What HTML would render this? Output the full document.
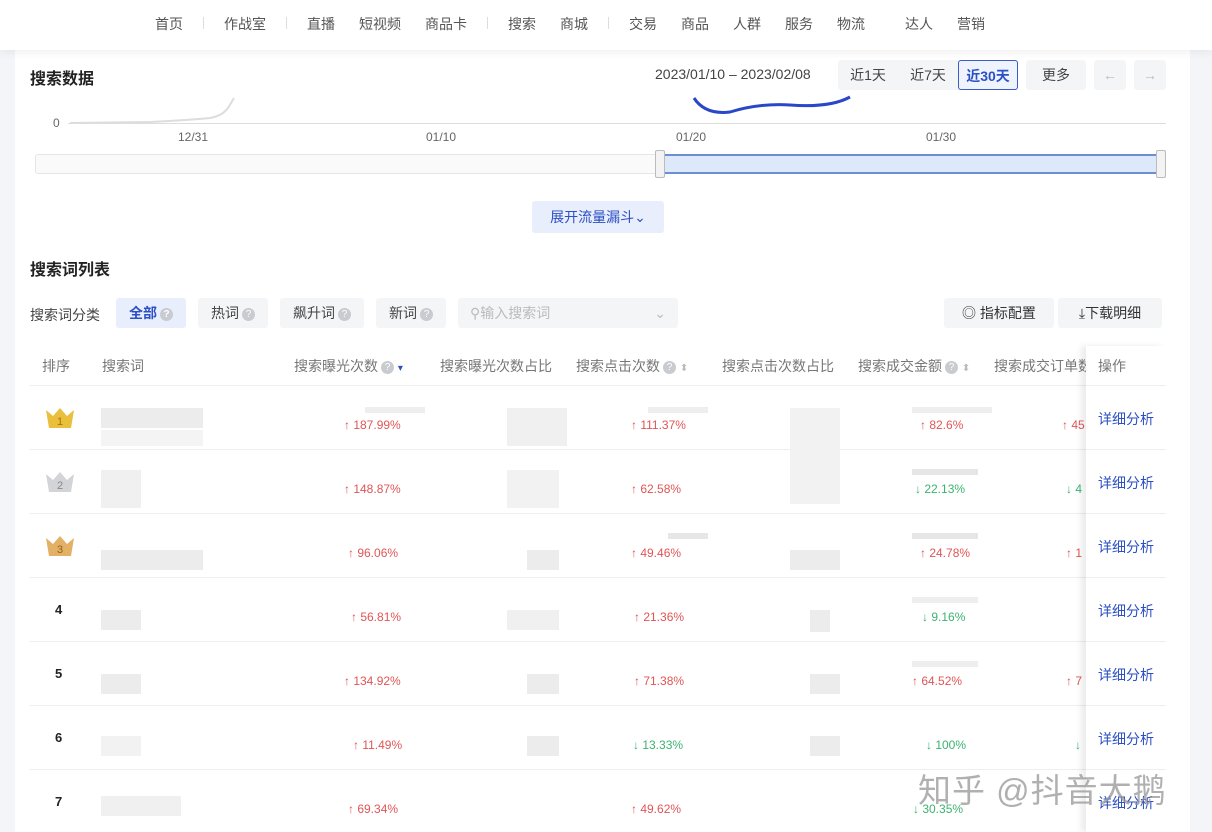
<!DOCTYPE html>
<html><head><meta charset="utf-8"><style>
*{margin:0;padding:0;box-sizing:border-box}
body{width:1212px;height:832px;overflow:hidden;background:#f3f5f9;font-family:"Liberation Sans","Noto Sans CJK SC",sans-serif;position:relative;color:#333}
.a{position:absolute}
.main{left:15px;top:0;width:1175px;height:832px;background:#fff}
.nav{left:0;top:0;width:1212px;height:50px;background:#fff;box-shadow:0 3px 8px rgba(0,0,0,.06);font-size:14px;color:#555}
.nav span{position:absolute;top:14px}
.sep{position:absolute;top:17px;width:1px;height:12px;background:#ddd}
.btn{position:absolute;height:30px;line-height:30px;text-align:center;font-size:14px;border-radius:3px}
.q{display:inline-block;width:13px;height:13px;border-radius:50%;background:#c8cbd0;color:#fff;font-size:10px;line-height:13px;text-align:center;vertical-align:1px;margin-left:3px}
.th{position:absolute;top:356px;font-size:14px;color:#777}
.hl{position:absolute;left:30px;width:1136px;height:1px;background:#eceef2}
.ol{position:absolute;left:1086px;width:80px;height:1px;background:#eceef2}
.up{color:#e05555;font-size:12px;position:absolute}
.dn{color:#3cb371;font-size:12px;position:absolute}
.blk{position:absolute;background:#ececec}
.op{position:absolute;left:1098px;font-size:14px;color:#2b4fc4}
.rk{position:absolute;left:55px;font-size:13px;font-weight:bold;color:#222}
</style></head><body>
<div class="a main"></div>
<div class="a nav">
<span style="left:155px">首页</span><div class="sep" style="left:203px"></div>
<span style="left:224px">作战室</span><div class="sep" style="left:286px"></div>
<span style="left:307px">直播</span><span style="left:359px">短视频</span><span style="left:425px">商品卡</span><div class="sep" style="left:487px"></div>
<span style="left:508px">搜索</span><span style="left:560px">商城</span><div class="sep" style="left:608px"></div>
<span style="left:629px">交易</span><span style="left:681px">商品</span><span style="left:733px">人群</span><span style="left:785px">服务</span><span style="left:837px">物流</span><span style="left:905px">达人</span><span style="left:957px">营销</span>
</div>
<div class="a" style="left:30px;top:65px;font-size:16px;font-weight:bold;color:#222">搜索数据</div>
<div class="a" style="left:655px;top:66px;font-size:14px;color:#444">2023/01/10 – 2023/02/08</div>
<div class="btn" style="left:838px;top:60px;width:180px;background:#f4f5f7"></div>
<div class="btn" style="left:838px;top:60px;width:60px;color:#444">近1天</div>
<div class="btn" style="left:898px;top:60px;width:60px;color:#444">近7天</div>
<div class="btn" style="left:958px;top:60px;width:60px;color:#2b4fc4;font-weight:bold;border:1px solid #3b5cc4;background:#eef3fd">近30天</div>
<div class="btn" style="left:1026px;top:60px;width:60px;background:#f4f5f7;color:#444">更多</div>
<div class="btn" style="left:1094px;top:60px;width:32px;background:#f4f5f7;color:#bbb">←</div>
<div class="btn" style="left:1134px;top:60px;width:32px;background:#f4f5f7;color:#bbb">→</div>
<div class="a" style="left:53px;top:116px;font-size:12px;color:#666">0</div>
<div class="a" style="left:68px;top:123px;width:1098px;height:1px;background:#ddd"></div>
<svg class="a" style="left:0;top:90px" width="1212" height="40"><path d="M70 33 L150 32 Q190 30 210 28 Q222 26 228 18 L234 8" stroke="#ddd" stroke-width="2" fill="none"/><path d="M694 8 Q705 25 730 22 Q760 13 790 15 Q830 18 850 7" stroke="#2a47c9" stroke-width="3" fill="none"/></svg>
<div class="a" style="left:178px;top:130px;font-size:12px;color:#666">12/31</div>
<div class="a" style="left:426px;top:130px;font-size:12px;color:#666">01/10</div>
<div class="a" style="left:676px;top:130px;font-size:12px;color:#666">01/20</div>
<div class="a" style="left:926px;top:130px;font-size:12px;color:#666">01/30</div>
<div class="a" style="left:35px;top:154px;width:630px;height:20px;border:1px solid #e6e6e6;background:#fafafa;border-radius:3px"></div>
<div class="a" style="left:663px;top:154px;width:497px;height:20px;background:#dde8fb;border-top:2px solid #6b8fd1;border-bottom:2px solid #6b8fd1"></div>
<div class="a" style="left:655px;top:150px;width:10px;height:28px;border:1px solid #bbb;background:#f3f3f3;border-radius:2px"></div>
<div class="a" style="left:1156px;top:150px;width:10px;height:28px;border:1px solid #bbb;background:#f3f3f3;border-radius:2px"></div>
<div class="btn" style="left:532px;top:201px;width:132px;height:32px;line-height:32px;background:#e8eefc;color:#2b4fc4">展开流量漏斗⌄</div>
<div class="a" style="left:30px;top:256px;font-size:16px;font-weight:bold;color:#222">搜索词列表</div>
<div class="a" style="left:30px;top:305px;font-size:14px;color:#444">搜索词分类</div>
<div class="btn" style="left:116px;top:298px;width:70px;background:#e8eefc;color:#2b4fc4;font-weight:bold">全部<span class="q">?</span></div>
<div class="btn" style="left:198px;top:298px;width:70px;background:#f4f5f7;color:#444">热词<span class="q">?</span></div>
<div class="btn" style="left:280px;top:298px;width:84px;background:#f4f5f7;color:#444">飙升词<span class="q">?</span></div>
<div class="btn" style="left:376px;top:298px;width:70px;background:#f4f5f7;color:#444">新词<span class="q">?</span></div>
<div class="btn" style="left:458px;top:298px;width:220px;background:#f4f5f7;color:#bbb;text-align:left;padding-left:12px">⚲输入搜索词<span style="position:absolute;right:12px">⌄</span></div>
<div class="btn" style="left:944px;top:298px;width:110px;background:#f4f5f7;color:#333">◎ 指标配置</div>
<div class="btn" style="left:1058px;top:298px;width:104px;background:#f4f5f7;color:#333">⤓下载明细</div>
<div class="th" style="left:42px">排序</div><div class="th" style="left:102px">搜索词</div>
<div class="th" style="left:294px">搜索曝光次数<span class="q">?</span> <span style="color:#2b4fc4;font-size:10px">▾</span></div>
<div class="th" style="left:440px">搜索曝光次数占比</div>
<div class="th" style="left:576px">搜索点击次数<span class="q">?</span> <span style="font-size:10px;color:#bbb">⬍</span></div>
<div class="th" style="left:722px">搜索点击次数占比</div>
<div class="th" style="left:858px">搜索成交金额<span class="q">?</span> <span style="font-size:10px;color:#bbb">⬍</span></div>
<div class="th" style="left:994px;width:92px;overflow:hidden;white-space:nowrap">搜索成交订单数</div>
<div class="hl" style="top:385px"></div><div class="hl" style="top:449px"></div><div class="hl" style="top:513px"></div><div class="hl" style="top:577px"></div><div class="hl" style="top:641px"></div><div class="hl" style="top:705px"></div><div class="hl" style="top:769px"></div>
<div class="blk" style="left:101px;top:408px;width:102px;height:20px"></div><div class="blk" style="left:101px;top:430px;width:102px;height:16px;background:#f4f4f4"></div>
<div class="blk" style="left:101px;top:470px;width:40px;height:38px;background:#f0f0f0"></div>
<div class="blk" style="left:101px;top:550px;width:102px;height:20px"></div>
<div class="blk" style="left:101px;top:610px;width:40px;height:20px"></div>
<div class="blk" style="left:101px;top:674px;width:40px;height:20px"></div>
<div class="blk" style="left:101px;top:736px;width:40px;height:20px;background:#f2f2f2"></div>
<div class="blk" style="left:101px;top:796px;width:80px;height:20px;background:#f0f0f0"></div>
<div class="blk" style="left:507px;top:408px;width:60px;height:38px;background:#f0f0f0"></div>
<div class="blk" style="left:507px;top:470px;width:52px;height:38px;background:#f2f2f2"></div>
<div class="blk" style="left:527px;top:550px;width:32px;height:20px"></div>
<div class="blk" style="left:507px;top:610px;width:52px;height:20px;background:#f0f0f0"></div>
<div class="blk" style="left:527px;top:674px;width:32px;height:20px"></div>
<div class="blk" style="left:527px;top:736px;width:32px;height:20px"></div>
<div class="blk" style="left:790px;top:408px;width:50px;height:96px;background:#f2f2f2"></div>
<div class="blk" style="left:790px;top:550px;width:50px;height:20px"></div>
<div class="blk" style="left:810px;top:610px;width:20px;height:22px"></div>
<div class="blk" style="left:810px;top:674px;width:30px;height:20px"></div>
<div class="blk" style="left:810px;top:736px;width:30px;height:20px"></div>
<div class="blk" style="left:365px;top:407px;width:60px;height:6px;background:#eee"></div>
<div class="blk" style="left:648px;top:407px;width:60px;height:6px;background:#eee"></div>
<div class="blk" style="left:912px;top:407px;width:80px;height:6px;background:#eee"></div>
<div class="blk" style="left:912px;top:469px;width:66px;height:6px;background:#e6e6e6"></div>
<div class="blk" style="left:912px;top:533px;width:66px;height:6px;background:#e6e6e6"></div>
<div class="blk" style="left:668px;top:533px;width:40px;height:6px;background:#e6e6e6"></div>
<div class="blk" style="left:912px;top:597px;width:66px;height:6px;background:#eee"></div>
<div class="blk" style="left:912px;top:661px;width:66px;height:6px;background:#eee"></div>
<svg class="a" style="left:44px;top:406px" width="32" height="24"><path d="M2 4 L9 10 L16 2 L23 10 L30 4 L27 22 L5 22Z" fill="#e9bf3c"/><text x="16" y="19" font-size="11" text-anchor="middle" fill="#a07410" font-family="Liberation Sans">1</text></svg>
<svg class="a" style="left:44px;top:470px" width="32" height="24"><path d="M2 4 L9 10 L16 2 L23 10 L30 4 L27 22 L5 22Z" fill="#d2d4d8"/><text x="16" y="19" font-size="11" text-anchor="middle" fill="#888" font-family="Liberation Sans">2</text></svg>
<svg class="a" style="left:44px;top:534px" width="32" height="24"><path d="M2 4 L9 10 L16 2 L23 10 L30 4 L27 22 L5 22Z" fill="#e2b165"/><text x="16" y="19" font-size="11" text-anchor="middle" fill="#94601f" font-family="Liberation Sans">3</text></svg>
<div class="rk" style="top:602px">4</div><div class="rk" style="top:666px">5</div><div class="rk" style="top:730px">6</div><div class="rk" style="top:794px">7</div>
<div class="up" style="left:344px;top:418px">↑ 187.99%</div><div class="up" style="left:631px;top:418px">↑ 111.37%</div><div class="up" style="left:920px;top:418px">↑ 82.6%</div><div class="up" style="left:1062px;top:418px">↑ 45</div>
<div class="up" style="left:344px;top:482px">↑ 148.87%</div><div class="up" style="left:631px;top:482px">↑ 62.58%</div><div class="dn" style="left:915px;top:482px">↓ 22.13%</div><div class="dn" style="left:1066px;top:482px">↓ 4</div>
<div class="up" style="left:348px;top:546px">↑ 96.06%</div><div class="up" style="left:631px;top:546px">↑ 49.46%</div><div class="up" style="left:920px;top:546px">↑ 24.78%</div><div class="up" style="left:1066px;top:546px">↑ 1</div>
<div class="up" style="left:351px;top:610px">↑ 56.81%</div><div class="up" style="left:634px;top:610px">↑ 21.36%</div><div class="dn" style="left:922px;top:610px">↓ 9.16%</div>
<div class="up" style="left:344px;top:674px">↑ 134.92%</div><div class="up" style="left:634px;top:674px">↑ 71.38%</div><div class="up" style="left:912px;top:674px">↑ 64.52%</div><div class="up" style="left:1066px;top:674px">↑ 7</div>
<div class="up" style="left:353px;top:738px">↑ 11.49%</div><div class="dn" style="left:633px;top:738px">↓ 13.33%</div><div class="dn" style="left:926px;top:738px">↓ 100%</div><div class="dn" style="left:1075px;top:738px">↓</div>
<div class="up" style="left:348px;top:802px">↑ 69.34%</div><div class="up" style="left:631px;top:802px">↑ 49.62%</div><div class="dn" style="left:913px;top:802px">↓ 30.35%</div>
<div class="a" style="left:1086px;top:346px;width:80px;height:486px;background:#fff;box-shadow:-5px 0 6px rgba(0,0,0,.08)"></div>
<div class="th" style="left:1098px">操作</div>
<div class="ol" style="top:385px"></div><div class="ol" style="top:449px"></div><div class="ol" style="top:513px"></div><div class="ol" style="top:577px"></div><div class="ol" style="top:641px"></div><div class="ol" style="top:705px"></div><div class="ol" style="top:769px"></div>
<div class="op" style="top:409px">详细分析</div><div class="op" style="top:473px">详细分析</div><div class="op" style="top:537px">详细分析</div><div class="op" style="top:601px">详细分析</div><div class="op" style="top:665px">详细分析</div><div class="op" style="top:729px">详细分析</div><div class="op" style="top:793px">详细分析</div>
<div class="a" style="left:918px;top:764px;font-size:33px;color:rgba(150,150,150,.75);letter-spacing:1px">知乎 @抖音大鹅</div>
</body></html>
